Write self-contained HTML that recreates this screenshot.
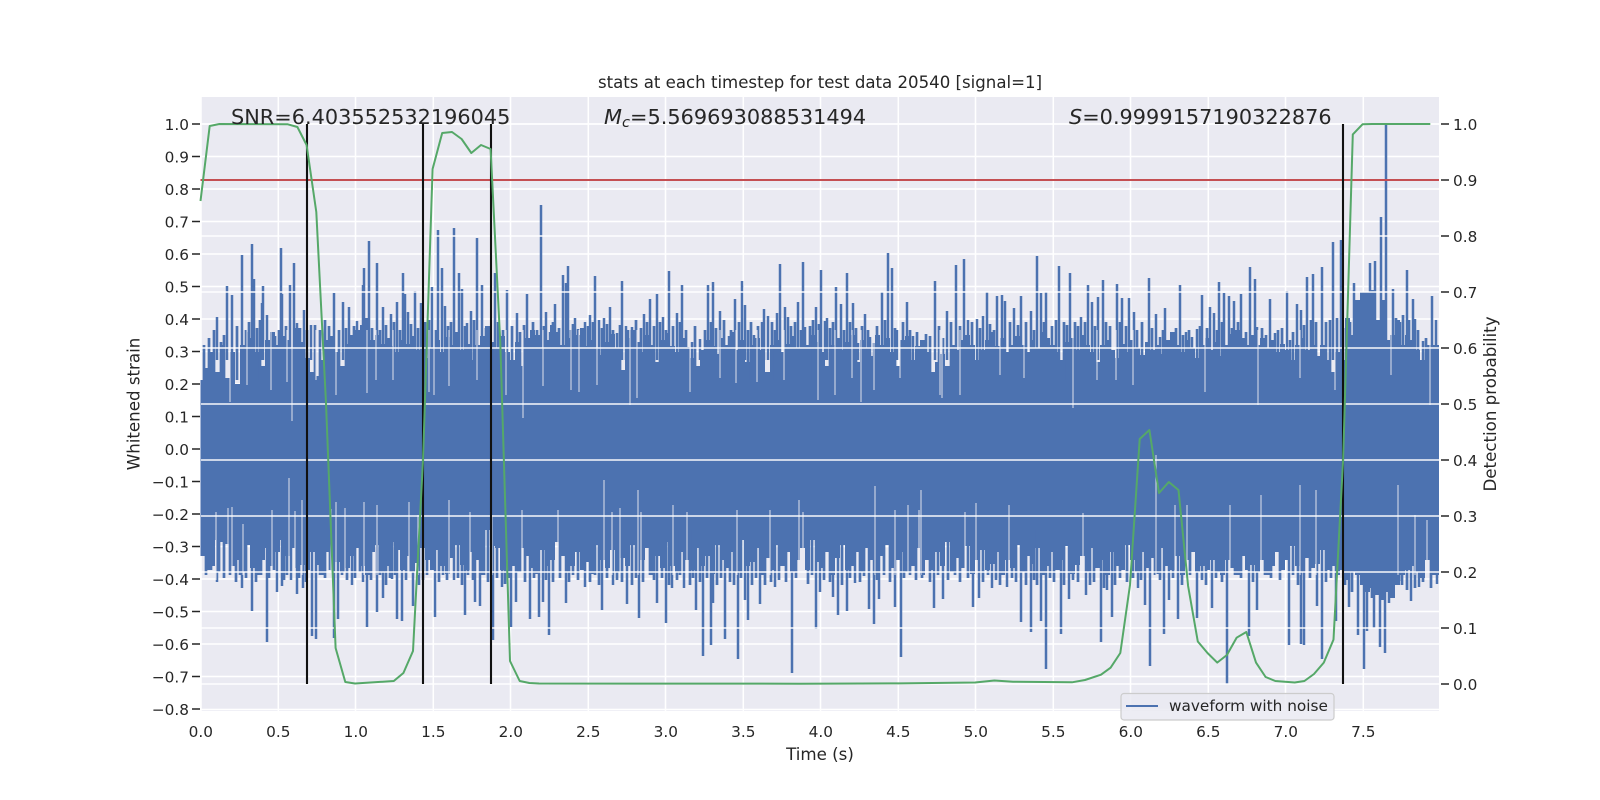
<!DOCTYPE html>
<html><head><meta charset="utf-8"><style>
html,body{margin:0;padding:0;background:#fff}
svg{display:block}
text{font-family:"DejaVu Sans",sans-serif;fill:#262626}
.t{font-size:15.3px}
</style></head><body>
<svg width="1600" height="800" viewBox="0 0 1600 800" xmlns="http://www.w3.org/2000/svg">
<defs><clipPath id="c"><rect x="200.5" y="97" width="1238.5" height="614"/></clipPath></defs>
<rect x="200.5" y="97" width="1238.5" height="614" fill="#eaeaf2"/>
<path stroke="#fff" stroke-width="1.5" fill="none" d="M201 124H1439M201 156.5H1439M201 189H1439M201 221.5H1439M201 254H1439M201 286.5H1439M201 319H1439M201 351.5H1439M201 384H1439M201 416.5H1439M201 449H1439M201 481.5H1439M201 514H1439M201 546.5H1439M201 579H1439M201 611.5H1439M201 644H1439M201 676.5H1439M201 709.5H1439M201 97V711M278.3 97V711M355.5 97V711M433.3 97V711M510.5 97V711M588.3 97V711M665.5 97V711M743.3 97V711M820.5 97V711M898.3 97V711M975.5 97V711M1053.3 97V711M1130.5 97V711M1208.3 97V711M1285.5 97V711M1363.3 97V711"/>
<g clip-path="url(#c)">
<path fill="#4c72b0" d="M200 449V380h5V368h5V352h5V372h5V345h5V378h5V352h5V384h5V345h5V332h5V338h5V352h5V366h5V340h5V332h5V345h5V336h5V340h5V348h5V328h5V342h5V358h5V372h5V376h5V360h5V340h5V336h5V352h5V366h5V344h5V335h5V330h5V325h5V318h5V340h5V335h5V344h5V338h5V346h5V352h5V340h5V344h5V336h5V350h5V342h5V358h5V348h5V340h5V352h5V337h5V345h5V332h5V350h5V344h5V360h5V345h5V336h5V326h5V342h5V348h5V336h5V352h5V360h5V342h5V366h5V338h5V330h5V335h5V348h5V340h5V325h5V332h5V345h5V338h5V352h5V335h5V328h5V346h5V340h5V348h5V355h5V342h5V334h5V348h5V370h5V338h5V330h5V342h5V352h5V335h5V345h5V362h5V340h5V333h5V346h5V352h5V338h5V347h5V358h5V366h5V350h5V340h5V346h5V354h5V338h5V345h5V332h5V350h5V340h5V362h5V345h5V338h5V350h5V372h5V345h5V340h5V352h5V344h5V336h5V348h5V358h5V345h5V335h5V342h5V352h5V366h5V345h5V338h5V350h5V342h5V335h5V362h5V340h5V348h5V356h5V335h5V345h5V338h5V352h5V366h5V340h5V336h5V360h5V346h5V340h5V352h5V372h5V362h5V354h5V366h5V345h5V350h5V340h5V335h5V345h5V360h5V350h5V340h5V332h5V346h5V338h5V352h5V345h5V336h5V345h5V352h5V340h5V348h5V332h5V338h5V345h5V352h5V360h5V342h5V338h5V350h5V335h5V345h5V352h5V362h5V345h5V340h5V350h5V358h5V344h5V352h5V340h5V348h5V355h5V342h5V350h5V345h5V354h5V340h5V332h5V345h5V352h5V340h5V348h5V358h5V345h5V338h5V350h5V342h5V356h5V345h5V334h5V330h5V338h5V345h5V335h5V345h5V338h5V348h5V340h5V352h5V344h5V350h5V360h5V345h5V338h5V350h5V345h5V356h5V345h5V360h5V372h5V352h5V360h5V318h5V335h5V300h5V292h5V292h5V290h5V320h5V300h5V340h5V335h5V320h5V345h5V335h5V340h5V350h5V360h5V345H1440V449Z"/>
<path fill="#4c72b0" d="M200 449V556h5V570h5V566h5V540h5V542h5V544h5V566h5V560h5V572h5V545h5V568h5V575h5V560h5V548h5V566h5V552h5V540h5V556h5V548h5V568h5V565h5V570h5V552h5V565h5V575h5V552h5V570h5V562h5V572h5V568h5V556h5V548h5V566h5V575h5V552h5V545h5V572h5V566h5V542h5V550h5V570h5V556h5V572h5V563h5V548h5V560h5V570h5V550h5V566h5V574h5V558h5V545h5V565h5V570h5V552h5V560h5V575h5V530h5V546h5V548h5V570h5V560h5V566h5V572h5V548h5V556h5V568h5V574h5V550h5V566h5V560h5V542h5V556h5V572h5V566h5V552h5V570h5V562h5V574h5V545h5V560h5V568h5V550h5V572h5V558h5V566h5V545h5V570h5V560h5V548h5V575h5V556h5V568h5V542h5V566h5V572h5V552h5V560h5V570h5V548h5V566h5V556h5V574h5V545h5V560h5V568h5V552h5V572h5V540h5V566h5V562h5V548h5V575h5V558h5V570h5V545h5V566h5V552h5V572h5V560h5V548h5V570h5V540h5V562h5V568h5V552h5V575h5V558h5V545h5V570h5V566h5V552h5V572h5V548h5V560h5V574h5V556h5V545h5V568h5V560h5V552h5V572h5V566h5V548h5V575h5V560h5V570h5V552h5V566h5V542h5V572h5V558h5V568h5V546h5V574h5V560h5V550h5V570h5V564h5V552h5V575h5V560h5V568h5V545h5V572h5V556h5V564h5V548h5V575h5V566h5V552h5V570h5V560h5V546h5V574h5V565h5V556h5V572h5V548h5V568h5V560h5V575h5V552h5V566h5V570h5V545h5V560h5V572h5V552h5V568h5V558h5V574h5V548h5V566h5V570h5V556h5V575h5V560h5V552h5V572h5V566h5V570h5V560h5V572h5V575h5V560h5V568h5V575h5V556h5V570h5V565h5V572h5V560h5V575h5V566h5V552h5V570h5V560h5V546h5V566h5V572h5V558h5V568h5V564h5V550h5V570h5V566h5V575h5V570h5V580h5V572h5V575h5V585h5V592h5V588h5V595h5V600h5V592h5V598h5V585h5V575h5V570h5V566h5V572h5V578h5V560h5V575H1440V449Z"/>
<path stroke="#4c72b0" stroke-width="2.7" fill="none" d="M204 345V380M209 338V380M214 330V380M221 342V380M224 335V380M237 326V380M246 330V380M249 322V380M257 328V380M260 320V380M271 340V380M275 336V380M279 330V380M286 326V380M300 328V380M307 330V380M315 325V380M320 330V380M325 320V380M329 326V380M339 330V380M346 328V380M354 326V380M360 332V380M372 328V380M380 330V380M386 325V380M394 322V380M400 330V380M411 324V380M418 328V380M425 322V380M429 320V380M436 330V380M448 326V380M451 322V380M457 332V380M465 326V380M474 320V380M486 328V380M490 332V380M498 322V380M503 330V380M512 326V380M520 332V380M524 325V380M533 322V380M537 330V380M544 326V380M553 322V380M559 328V380M571 330V380M573 324V380M582 330V380M588 326V380M593 322V380M602 328V380M607 324V380M613 330V380M620 325V380M628 330V380M636 320V380M641 328V380M647 322V380M654 326V380M660 322V380M666 330V380M673 326V380M680 322V380M686 330V380M695 326V380M705 330V380M711 322V380M716 328V380M724 320V380M731 330V380M739 322V380M748 330V380M751 322V380M758 326V380M772 322V380M775 330V380M791 326V380M795 322V380M801 330V380M810 326V380M813 320V380M819 324V380M830 328V380M833 322V380M844 330V380M850 322V380M856 328V380M862 326V380M868 330V380M877 326V380M885 320V380M895 328V380M903 322V380M910 330V380M917 332V380M926 334V380M930 336V380M939 326V380M943 338V380M951 322V380M960 326V380M972 322V380M980 328V380M990 324V380M994 330V380M1010 322V380M1018 325V380M1026 322V380M1034 330V380M1044 322V380M1052 326V380M1056 320V380M1064 322V380M1067 325V380M1075 322V380M1078 326V380M1085 322V380M1095 326V380M1106 322V380M1110 326V380M1120 322V380M1126 326V380M1137 330V380M1142 322V380M1152 328V380M1163 330V380M1176 328V380M1183 335V380M1189 330V380M1200 326V380M1207 328V380M1217 330V380M1222 322V380M1232 328V380M1238 322V380M1246 332V380M1262 328V380M1266 335V380M1278 330V380M1282 328V380M1293 332V380M1304 325V380M1311 320V380M1316 322V380M1326 322V380M1330 320V380M1337 318V380M1346 328V380M1350 322V380M1357 318V380M1365 300V380M1396 318V380M1403 315V380M1409 320V380M1418 330V380M1426 338V380M1428 345V380"/>
<path stroke="#4c72b0" stroke-width="2.7" fill="none" d="M206 575V530M211 570V530M219 572V530M224 578V530M230 575V530M236 582V530M240 575V530M246 578V530M256 582V530M261 575V530M269 578V530M274 570V530M284 580V530M287 575V530M299 578V530M306 582V530M320 575V530M325 578V530M330 570V530M342 575V530M347 580V530M355 578V530M360 572V530M371 580V530M380 575V530M386 585V530M390 578V530M395 575V530M406 580V530M410 572V530M423 580V530M427 575V530M439 582V530M443 575V530M447 580V530M458 578V530M462 585V530M468 575V530M473 580V530M484 575V530M488 582V530M497 578V530M505 584V530M509 578V530M520 572V530M525 582V530M534 578V530M546 580V530M553 582V530M560 578V530M569 582V530M573 575V530M578 580V530M590 582V530M595 575V530M599 585V530M607 578V530M617 580V530M622 582V530M632 585V530M636 578V530M643 582V530M650 575V530M654 580V530M662 578V530M669 585V530M677 580V530M680 575V530M690 585V530M693 578V530M700 582V530M707 578V530M717 585V530M721 578V530M730 582V530M734 585V530M741 578V530M752 585V530M756 578V530M765 585V530M771 582V530M779 580V530M786 582V530M796 578V530M808 584V530M812 575V530M824 580V530M830 582V530M842 585V530M850 578V530M860 582V530M864 576V530M877 580V530M884 575V530M890 582V530M904 578V530M910 575V530M916 580V530M922 578V530M930 582V530M938 575V530M948 580V530M955 575V530M960 582V530M968 578V530M983 582V530M988 575V530M996 580V530M1000 585V530M1012 578V530M1016 582V530M1026 585V530M1034 580V530M1037 585V530M1050 578V530M1054 582V530M1064 585V530M1073 580V530M1078 582V530M1090 585V530M1094 582V530M1104 588V530M1115 585V530M1120 578V530M1127 582V530M1133 578V530M1141 580V530M1155 575V530M1160 580V530M1173 578V530M1182 585V530M1190 575V530M1202 580V530M1206 585V530M1216 578V530M1222 582V530M1235 575V530M1241 578V530M1253 582V530M1265 575V530M1271 578V530M1280 580V530M1293 575V530M1298 585V530M1310 578V530M1326 582V530M1331 578V530M1345 585V530M1352 592V530M1372 598V530M1392 592V530M1402 585V530M1407 590V530M1415 588V530M1423 582V530M1431 588V530"/>
<path stroke="#4c72b0" stroke-width="2.5" fill="none" d="M217 317V360M227 286V360M232 295V360M242 255V360M252 244V360M254 279V360M263 286V360M262 303V360M267 315V360M281 248V360M282 294V360M290 285V360M294 263V360M297 323V360M304 310V360M311 325V360M334 293V360M343 302V360M349 307V360M357 321V360M363 285V360M364 268V360M369 241V360M377 263V360M383 307V360M391 314V360M397 302V360M403 273V360M405 294V360M408 312V360M415 291V360M421 303V360M432 287V360M438 230V360M442 268V360M445 306V360M454 228V360M459 273V360M462 289V360M471 311V360M467 323V360M477 238V360M482 285V360M495 273V360M507 290V360M517 313V360M527 294V360M541 205V360M546 312V360M550 332V360M555 304V360M563 275V360M566 283V360M568 266V360M575 318V360M578 329V360M585 322V360M590 315V360M595 276V360M599 320V360M604 318V360M610 307V360M617 333V360M622 281V360M626 326V360M632 327V360M639 343V360M644 314V360M650 299V360M657 294V360M663 317V360M669 271V360M677 313V360M682 285V360M692 342V360M700 339V360M708 285V360M713 282V360M720 311V360M729 336V360M735 299V360M742 281V360M745 305V360M754 335V360M762 322V360M764 309V360M768 316V360M780 264V360M777 313V360M785 307V360M788 317V360M798 302V360M803 262V360M805 327V360M816 307V360M821 270V360M825 321V360M827 318V360M836 287V360M841 304V360M847 273V360M853 303V360M858 343V360M865 314V360M870 337V360M874 343V360M882 292V360M888 253V360M892 268V360M897 330V360M907 302V360M913 336V360M923 352V360M935 281V360M947 311V360M956 265V360M964 259V360M968 320V360M977 319V360M983 316V360M987 292V360M997 296V360M1002 295V360M1005 301V360M1014 308V360M1021 296V360M1031 311V360M1037 256V360M1041 293V360M1046 292V360M1059 266V360M1070 273V360M1081 317V360M1088 285V360M1092 302V360M1098 297V360M1103 280V360M1117 284V360M1122 298V360M1129 298V360M1134 312V360M1149 278V360M1156 314V360M1160 337V360M1165 308V360M1172 339V360M1180 285V360M1186 332V360M1192 337V360M1197 329V360M1202 295V360M1210 307V360M1214 313V360M1219 282V360M1224 293V360M1229 296V360M1234 301V360M1241 294V360M1250 267V360M1255 279V360M1257 327V360M1270 299V360M1275 333V360M1287 291V360M1290 340V360M1297 304V360M1301 310V360M1307 277V360M1313 274V360M1322 267V360M1333 242V360M1341 240V360M1354 283V360M1360 316V360M1370 263V360M1375 261V360M1381 217V360M1386 124V360M1393 289V360M1400 322V360M1407 270V360M1413 299V360M1415 319V360M1423 341V360M1432 296V360M1436 320V360M217 582V540M242 588V540M252 611V540M267 642V540M277 592V540M282 586V540M291 580V540M297 594V540M303 588V540M312 636V540M316 639V540M334 638V540M338 619V540M352 585V540M363 582V540M367 627V540M377 612V540M383 598V540M392 579V540M397 619V540M402 621V540M413 606V540M419 585V540M435 617V540M454 580V540M465 615V540M475 602V540M480 606V540M493 640V540M502 587V540M511 627V540M516 602V540M530 619V540M539 617V540M543 602V540M549 635V540M566 603V540M585 587V540M602 610V540M613 585V540M627 604V540M639 618V540M657 603V540M666 623V540M672 588V540M684 588V540M696 610V540M703 656V540M711 645V540M713 603V540M725 639V540M738 659V540M745 600V540M748 620V540M760 604V540M775 587V540M792 673V540M816 629V540M820 592V540M833 597V540M838 615V540M847 611V540M855 583V540M869 609V540M874 624V540M879 599V540M895 607V540M901 657V540M934 608V540M943 599V540M973 607V540M979 598V540M992 588V540M1007 587V540M1021 622V540M1031 632V540M1041 621V540M1046 669V540M1061 634V540M1069 599V540M1086 595V540M1101 642V540M1112 617V540M1107 590V540M1138 588V540M1145 605V540M1150 666V540M1164 634V540M1169 600V540M1178 619V540M1197 618V540M1212 608V540M1227 684V540M1257 610V540M1249 636V540M1289 645V540M1301 644V540M1304 645V540M1322 659V540M1317 606V540M1336 621V540M1349 607V540M1358 635V540M1364 669V540M1367 631V540M1374 628V540M1380 647V540M1385 653V540M1389 603V540M1411 601V540M1419 587V540M1437 584V540M1399 581V540"/>
<path stroke="#eaeaf2" stroke-width="1.1" stroke-opacity=".85" fill="none" d="M230 330V402M247 330V385M271 330V390M292 330V421M287 330V382M316 330V380M336 330V395M367 330V393M376 330V380M393 330V380M429 330V392M434 330V395M449 330V386M477 330V380M506 330V395M523 330V418M543 330V386M571 330V390M579 330V392M597 330V385M630 330V405M637 330V398M690 330V392M720 330V378M736 330V383M757 330V382M784 330V380M818 330V400M835 330V395M852 330V378M861 330V402M874 330V390M900 330V378M940 330V395M942 330V398M960 330V395M1000 330V375M1024 330V378M1073 330V408M1097 330V380M1116 330V380M1133 330V385M1205 330V392M1258 330V405M1300 330V378M1335 330V390M1391 330V375M1430 330V405M216 580V512M228 575V508M232 575V507M243 575V524M272 575V510M289 585V478M295 575V511M302 575V500M331 575V509M336 575V502M345 575V508M364 575V502M377 575V505M409 575V502M418 575V515M449 575V500M470 575V512M492 575V515M522 575V510M558 575V510M604 575V480M612 575V512M620 575V508M638 575V490M641 575V512M673 575V505M687 575V512M737 575V510M770 575V510M799 575V500M803 575V512M875 575V486M895 575V510M908 575V505M919 575V510M921 575V490M965 575V512M976 575V503M1009 575V505M1083 575V513M1156 575V455M1175 575V505M1187 575V505M1230 575V505M1261 575V495M1300 575V485M1316 575V490M1398 575V485M1415 575V515M1427 575V520"/>
<path stroke="#fff" stroke-width="1.5" fill="none" d="M201 124H1439M201 180H1439M201 236H1439M201 292H1439M201 348H1439M201 404H1439M201 460H1439M201 516H1439M201 572H1439M201 628H1439M201 684H1439" stroke-opacity=".95"/>
</g>
<path stroke="#c44e52" stroke-width="2" fill="none" d="M200.5 180H1439"/>
<path stroke="#111" stroke-width="2.1" fill="none" d="M307 124V684M423 124V684M491 124V684M1343 124V684"/>
<path stroke="#55a868" stroke-width="2" fill="none" stroke-linejoin="round" d="M200.5 201L209.7 126L219.4 124L287.8 124.3L297.4 127L306.6 145L316.3 212L326 403L335.6 648L345.3 682L355 683.5L393.8 681L403.4 673L413 651L423 460L432.6 169L442.2 133L452 132L461.6 139L471.3 153L481 145L490.6 149L500.3 343L510 661L519.7 681L529.4 683L539 683.5L800 683.7L900 683.4L975 682.5L994.4 680.5L1013 681.7L1072 682.3L1085 680L1101 674.7L1110.6 667.7L1120.3 653L1130 585L1139.7 439L1149.4 430L1159 493L1168.8 482L1178.5 490L1188.1 586L1197.8 641.5L1207.5 653L1217.2 662.6L1226.9 655L1236.6 637.7L1246.3 632L1256 662.6L1265.6 677L1275.3 681L1285 681.7L1294.7 682.5L1304.4 681L1314 674L1323.8 662.6L1333.5 639.6L1343.1 460L1352.8 134.4L1362.5 124.3L1372 124L1430.3 124"/>
<path stroke="#262626" stroke-width="1.6" fill="none" d="M192 124h8M192 156.5h8M192 189h8M192 221.5h8M192 254h8M192 286.5h8M192 319h8M192 351.5h8M192 384h8M192 416.5h8M192 449h8M192 481.5h8M192 514h8M192 546.5h8M192 579h8M192 611.5h8M192 644h8M192 676.5h8M192 709h8M1441 124h8M1441 180h8M1441 236h8M1441 292h8M1441 348h8M1441 404h8M1441 460h8M1441 516h8M1441 572h8M1441 628h8M1441 684h8"/>
<g class="t" text-anchor="end">
<text class="t" x="189" y="130">1.0</text><text class="t" x="189" y="162.5">0.9</text><text class="t" x="189" y="195">0.8</text><text class="t" x="189" y="227.5">0.7</text><text class="t" x="189" y="260">0.6</text><text class="t" x="189" y="292.5">0.5</text><text class="t" x="189" y="325">0.4</text><text class="t" x="189" y="357.5">0.3</text><text class="t" x="189" y="390">0.2</text><text class="t" x="189" y="422.5">0.1</text><text class="t" x="189" y="455">0.0</text><text class="t" x="189" y="487.5">−0.1</text><text class="t" x="189" y="520">−0.2</text><text class="t" x="189" y="552.5">−0.3</text><text class="t" x="189" y="585">−0.4</text><text class="t" x="189" y="617.5">−0.5</text><text class="t" x="189" y="650">−0.6</text><text class="t" x="189" y="682.5">−0.7</text><text class="t" x="189" y="715">−0.8</text>
</g>
<g>
<text class="t" x="1453" y="130">1.0</text><text class="t" x="1453" y="186">0.9</text><text class="t" x="1453" y="242">0.8</text><text class="t" x="1453" y="298">0.7</text><text class="t" x="1453" y="354">0.6</text><text class="t" x="1453" y="410">0.5</text><text class="t" x="1453" y="466">0.4</text><text class="t" x="1453" y="522">0.3</text><text class="t" x="1453" y="578">0.2</text><text class="t" x="1453" y="634">0.1</text><text class="t" x="1453" y="690">0.0</text>
</g>
<g text-anchor="middle">
<text class="t" x="200.8" y="737">0.0</text><text class="t" x="278.3" y="737">0.5</text><text class="t" x="355.8" y="737">1.0</text><text class="t" x="433.3" y="737">1.5</text><text class="t" x="510.8" y="737">2.0</text><text class="t" x="588.3" y="737">2.5</text><text class="t" x="665.8" y="737">3.0</text><text class="t" x="743.3" y="737">3.5</text><text class="t" x="820.8" y="737">4.0</text><text class="t" x="898.3" y="737">4.5</text><text class="t" x="975.8" y="737">5.0</text><text class="t" x="1053.3" y="737">5.5</text><text class="t" x="1130.8" y="737">6.0</text><text class="t" x="1208.3" y="737">6.5</text><text class="t" x="1285.8" y="737">7.0</text><text class="t" x="1363.3" y="737">7.5</text>
</g>
<text x="820" y="88" text-anchor="middle" font-size="16.6">stats at each timestep for test data 20540 [signal=1]</text>
<text x="820" y="760" text-anchor="middle" font-size="16.67">Time (s)</text>
<text transform="translate(139.5 404) rotate(-90)" text-anchor="middle" font-size="16.67">Whitened strain</text>
<text transform="translate(1496 404) rotate(-90)" text-anchor="middle" font-size="16.67">Detection probability</text>
<text x="231" y="124" font-size="20.83">SNR=6.403552532196045</text>
<text x="604" y="124" font-size="20.83"><tspan font-style="italic">M</tspan><tspan font-style="italic" font-size="14.6" dy="3">c</tspan><tspan dy="-3">=5.569693088531494</tspan></text>
<text x="1069" y="124" font-size="20.83"><tspan font-style="italic">S</tspan>=0.9999157190322876</text>
<rect x="1121" y="693.5" width="213" height="26.5" rx="3" fill="#eaeaf2" fill-opacity=".85" stroke="#cccccc" stroke-width="1.2"/>
<path stroke="#4c72b0" stroke-width="2" d="M1126 706H1158"/>
<text class="t" x="1169" y="711">waveform with noise</text>
</svg>
</body></html>
